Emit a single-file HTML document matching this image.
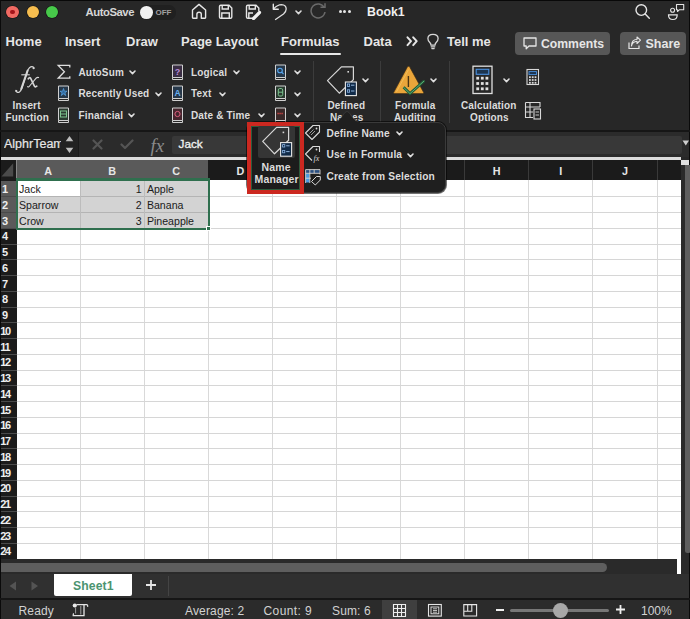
<!DOCTYPE html><html><head><meta charset="utf-8"><style>
*{box-sizing:border-box;margin:0;padding:0}
html,body{width:690px;height:619px;overflow:hidden;background:#272727;font-family:"Liberation Sans",sans-serif;}
.a{position:absolute}
.t{position:absolute;white-space:nowrap;line-height:1}
.tab{position:absolute;top:35.3px;font-size:13px;font-weight:bold;color:#e6e6e6;white-space:nowrap;line-height:13px}
.rl{position:absolute;font-size:10px;font-weight:bold;color:#dcdcdc;white-space:nowrap;line-height:10px;letter-spacing:0.15px}
.chev{position:absolute;width:6px;height:6px}
.cell{position:absolute;font-size:10.6px;color:#1a1a1a;white-space:nowrap;line-height:11px}
.rh{position:absolute;left:2px;font-size:11px;font-weight:bold;color:#eee;line-height:11px;letter-spacing:-0.5px}
.rh2{left:0.3px;letter-spacing:-1.3px}
.ch{position:absolute;top:166.3px;font-size:10.8px;font-weight:bold;color:#e6e6e6;line-height:10px;text-align:center}
.st{position:absolute;top:605px;font-size:12px;color:#d2d2d2;white-space:nowrap;line-height:12px;letter-spacing:0.15px}
</style></head><body>
<div class="a" style="left:0;top:0;width:690px;height:1px;background:#080808"></div>
<div class="a" style="left:0;top:0;width:1px;height:619px;background:#0a0a0a"></div>
<div class="a" style="left:689px;top:0;width:1px;height:619px;background:#0a0a0a"></div>
<div class="a" style="left:6.3px;top:5.999999999999999px;width:12.4px;height:12.4px;border-radius:50%;background:#f06a63;box-shadow:0 0 0 0.6px rgba(0,0,0,.5)"></div>
<div class="a" style="left:10.3px;top:10.0px;width:4.4px;height:4.4px;border-radius:50%;background:#a5151b;filter:blur(0.6px)"></div>
<div class="a" style="left:26.500000000000004px;top:5.999999999999999px;width:12.4px;height:12.4px;border-radius:50%;background:#f6bd4f;box-shadow:0 0 0 0.6px rgba(0,0,0,.5)"></div>
<div class="a" style="left:45.599999999999994px;top:5.999999999999999px;width:12.4px;height:12.4px;border-radius:50%;background:#47c94a;box-shadow:0 0 0 0.6px rgba(0,0,0,.5)"></div>
<div class="t" style="left:85.5px;top:6.5px;font-size:11.3px;font-weight:bold;color:#d6d6d6;letter-spacing:-0.45px">AutoSave</div>
<div class="a" style="left:139.5px;top:5px;width:36.5px;height:14.5px;border-radius:7px;background:#202020"></div>
<div class="a" style="left:140.3px;top:5.8px;width:12.8px;height:12.8px;border-radius:50%;background:#f0f0f0"></div>
<div class="t" style="left:155.5px;top:8.6px;font-size:8px;font-weight:bold;color:#a0a0a0">OFF</div>
<svg class="a" style="left:188px;top:0px" width="24" height="24" viewBox="188 0 24 24"><path d="M192.5 10 L199 4.4 L205.6 10 V17.6 Q205.6 18.2 205 18.2 H201.3 V14.2 Q201.3 12.3 199.1 12.3 Q196.9 12.3 196.9 14.2 V18.2 H193.1 Q192.5 18.2 192.5 17.6 Z" fill="none" stroke="#e6e6e6" stroke-width="1.4" stroke-linejoin="round"/></svg>
<svg class="a" style="left:217px;top:3px" width="17" height="17" viewBox="0 0 17 17"><path d="M2.5 3.5 Q2.5 2.2 3.8 2.2 H12 L14.8 5 V14 Q14.8 15.3 13.5 15.3 H3.8 Q2.5 15.3 2.5 14 Z" fill="none" stroke="#e6e6e6" stroke-width="1.4"/><path d="M5.2 2.5 V6 H11.3 V2.5 M4.8 15 V10 H12.3 V15" fill="none" stroke="#e6e6e6" stroke-width="1.4"/></svg>
<svg class="a" style="left:244px;top:3px" width="18" height="17" viewBox="0 0 18 17"><path d="M8 15.3 H3.8 Q2.5 15.3 2.5 14 V3.5 Q2.5 2.2 3.8 2.2 H12 L14.8 5 V8" fill="none" stroke="#e6e6e6" stroke-width="1.4"/><path d="M5.2 2.5 V6 H11.3 V2.5 M4.8 15 V10 H9" fill="none" stroke="#e6e6e6" stroke-width="1.4"/><path d="M9.5 15.5 L15.5 9.5" stroke="#f0f0f0" stroke-width="3.2" stroke-linecap="round"/></svg>
<svg class="a" style="left:266px;top:0px" width="24" height="24" viewBox="0 0 24 24"><path d="M7.5 9 Q11.5 4.6 15.5 4.6 Q20.2 4.8 20.2 9 Q20.2 11.5 17.5 14 L9.5 19.5" fill="none" stroke="#e0e0e0" stroke-width="1.3" stroke-linecap="round" stroke-linejoin="round"/><path d="M7.3 4.3 V9.2 H12.3" fill="none" stroke="#e6e6e6" stroke-width="1.4" stroke-linecap="round" stroke-linejoin="round"/></svg>
<svg class="a" style="left:294.5px;top:10px" width="7" height="5" viewBox="0 0 7 5"><path d="M1 1 L3.5 3.6 L6 1" fill="none" stroke="#dcdcdc" stroke-width="1.6" stroke-linecap="round" stroke-linejoin="round"/></svg>
<svg class="a" style="left:309px;top:3px" width="19" height="17" viewBox="0 0 19 17"><path d="M15.2 4.5 A7 7 0 1 0 16 9" fill="none" stroke="#6a6a6a" stroke-width="1.5"/><path d="M11.5 4.2 H16 V0.2" fill="none" stroke="#6a6a6a" stroke-width="1.5"/></svg>
<div class="a" style="left:338.5px;top:10.2px;width:3px;height:3px;border-radius:50%;background:#e6e6e6"></div>
<div class="a" style="left:343.3px;top:10.2px;width:3px;height:3px;border-radius:50%;background:#e6e6e6"></div>
<div class="a" style="left:348.2px;top:10.2px;width:3px;height:3px;border-radius:50%;background:#e6e6e6"></div>
<div class="t" style="left:367px;top:6px;font-size:12.3px;font-weight:bold;color:#f0f0f0">Book1</div>
<svg class="a" style="left:633px;top:2px" width="19" height="19" viewBox="0 0 19 19"><circle cx="8.3" cy="8.1" r="5.3" fill="none" stroke="#e6e6e6" stroke-width="1.4"/><path d="M12.2 12 L16.3 16.3" stroke="#e6e6e6" stroke-width="1.4" stroke-linecap="round"/></svg>
<svg class="a" style="left:666px;top:2px" width="21" height="20" viewBox="0 0 21 20"><circle cx="6.6" cy="8.2" r="2" fill="none" stroke="#e6e6e6" stroke-width="1.1"/><path d="M2.5 12.8 H11.2 Q11.3 17.5 6.9 17.5 Q2.4 17.5 2.5 12.8 Z" fill="none" stroke="#e6e6e6" stroke-width="1.2"/><path d="M10.5 2.5 H17.7 V7.7 H13.5 L11.5 9.5 V7.7 H10.5 Z" fill="none" stroke="#e6e6e6" stroke-width="1.1" stroke-linejoin="round"/></svg>
<div class="tab" style="left:5.5px">Home</div>
<div class="tab" style="left:65px">Insert</div>
<div class="tab" style="left:126px">Draw</div>
<div class="tab" style="left:181px">Page Layout</div>
<div class="tab" style="left:281px">Formulas</div>
<div class="tab" style="left:363.5px">Data</div>
<div class="a" style="left:280px;top:53px;width:61px;height:2px;background:#e8e8e8;border-radius:1px"></div>
<svg class="a" style="left:400px;top:30px" width="24" height="24" viewBox="400 30 24 24"><path d="M407.5 37.3 L411 41.2 L407.5 45.1 M413.2 37.3 L416.7 41.2 L413.2 45.1" fill="none" stroke="#e6e6e6" stroke-width="2" stroke-linecap="round" stroke-linejoin="round"/></svg>
<svg class="a" style="left:420px;top:30px" width="24" height="24" viewBox="420 30 24 24"><path d="M431 45.2 Q431 43.5 429.6 42.2 Q427.9 40.6 427.9 38.6 Q427.9 34.4 433 34.4 Q438.1 34.4 438.1 38.6 Q438.1 40.6 436.4 42.2 Q435 43.5 435 45.2 Z" fill="none" stroke="#d8d8d8" stroke-width="1.3" stroke-linejoin="round"/><path d="M431.2 46.8 H434.8 M431.8 48.6 H434.2" stroke="#d8d8d8" stroke-width="1.2" stroke-linecap="round"/></svg>
<div class="tab" style="left:447px">Tell me</div>
<div class="a" style="left:515px;top:31.5px;width:95px;height:23px;border-radius:4px;background:#575757"></div>
<svg class="a" style="left:522px;top:36px" width="16" height="15" viewBox="0 0 16 15"><path d="M2 2 H14 V10 H7 L4.2 12.8 V10 H2 Z" fill="none" stroke="#e6e6e6" stroke-width="1.3" stroke-linejoin="round"/></svg>
<div class="tab" style="left:541px;top:37.8px;font-size:12.2px">Comments</div>
<div class="a" style="left:620px;top:31.5px;width:66px;height:23px;border-radius:4px;background:#575757"></div>
<svg class="a" style="left:627px;top:36px" width="15" height="15" viewBox="0 0 15 15"><path d="M2 6.5 V12.5 H12 V9.5" fill="none" stroke="#e6e6e6" stroke-width="1.2"/><path d="M4.5 10 Q5.5 5.5 10 5.2 V7.5 L13.5 4.2 L10 1 V3.3 Q4.5 3.8 4.5 10 Z" fill="none" stroke="#e6e6e6" stroke-width="1.1" stroke-linejoin="round"/></svg>
<div class="tab" style="left:645.5px;top:37.5px;font-size:12.5px">Share</div>
<svg class="a" style="left:0;top:58px" width="56" height="40" viewBox="0 58 56 40"><path d="M16 90.3 Q16.6 93.2 19.2 92.2 Q20.9 91.2 22.2 87.5 L27.5 71 Q29.3 66.5 32 66.6 Q33.6 66.8 33.8 68" fill="none" stroke="#d6d6d6" stroke-width="1.2" stroke-linecap="round"/><path d="M21.2 89 L27.6 70.6" stroke="#d6d6d6" stroke-width="2" stroke-linecap="round"/><circle cx="33.6" cy="68.2" r="1.1" fill="#d6d6d6"/><circle cx="16.3" cy="91" r="1.1" fill="#d6d6d6"/><path d="M21.3 74.8 H29.8" stroke="#d6d6d6" stroke-width="1.1"/><path d="M28.3 78.8 Q29.5 77 30.6 78.2 L34.3 85.8 Q35.2 87.6 36.8 86.2" fill="none" stroke="#d6d6d6" stroke-width="1.7" stroke-linecap="round"/><path d="M38.6 77.6 Q37.5 77 36.3 78 L29.6 86 Q28.5 87.5 27.6 86.6" fill="none" stroke="#d6d6d6" stroke-width="1.1" stroke-linecap="round"/></svg>
<div class="rl" style="left:12.5px;top:101px">Insert</div>
<div class="rl" style="left:5.5px;top:112.8px">Function</div>
<svg class="a" style="left:52px;top:60px" width="24" height="24" viewBox="52 60 24 24"><path d="M69.8 67.6 V65.4 H58.2 L64.4 71.8 L58.2 78.2 H69.8 V76.2" fill="none" stroke="#dedede" stroke-width="1.3" stroke-linejoin="miter"/></svg>
<svg class="a" style="left:57px;top:85px" width="13" height="17" viewBox="0 0 13 17"><path d="M1.5 1 H11.5 V13.5 H1.5 Z" fill="#26384a" stroke="#d0d0d0" stroke-width="1"/><path d="M1.5 13.5 V15.5 H11.5 V13.5" fill="none" stroke="#d0d0d0" stroke-width="1"/><path d="M6.5 3.5 L7.4 6.2 H10 L7.9 7.8 L8.7 10.5 L6.5 8.9 L4.3 10.5 L5.1 7.8 L3 6.2 H5.6 Z" fill="#2f6aa0" stroke="#5aa6e8" stroke-width="0.7"/></svg>
<svg class="a" style="left:57px;top:107px" width="13" height="17" viewBox="0 0 13 17"><path d="M1.5 1 H11.5 V13.5 H1.5 Z" fill="#2a3a30" stroke="#d0d0d0" stroke-width="1"/><path d="M1.5 13.5 V15.5 H11.5 V13.5" fill="none" stroke="#d0d0d0" stroke-width="1"/><rect x="3.5" y="4" width="6" height="6" fill="none" stroke="#7cc38e" stroke-width="1"/><path d="M3.5 7 H9.5" stroke="#7cc38e" stroke-width="1"/></svg>
<div class="rl" style="left:78.5px;top:67.5px">AutoSum</div>
<svg class="a" style="left:128.5px;top:70px" width="7" height="5" viewBox="0 0 7 5"><path d="M1 1 L3.5 3.6 L6 1" fill="none" stroke="#e0e0e0" stroke-width="1.6" stroke-linecap="round" stroke-linejoin="round"/></svg>
<div class="rl" style="left:78.5px;top:89px">Recently Used</div>
<svg class="a" style="left:155px;top:91.5px" width="7" height="5" viewBox="0 0 7 5"><path d="M1 1 L3.5 3.6 L6 1" fill="none" stroke="#e0e0e0" stroke-width="1.6" stroke-linecap="round" stroke-linejoin="round"/></svg>
<div class="rl" style="left:78.5px;top:110.5px">Financial</div>
<svg class="a" style="left:127.5px;top:113px" width="7" height="5" viewBox="0 0 7 5"><path d="M1 1 L3.5 3.6 L6 1" fill="none" stroke="#e0e0e0" stroke-width="1.6" stroke-linecap="round" stroke-linejoin="round"/></svg>
<svg class="a" style="left:171px;top:64px" width="13" height="17" viewBox="0 0 13 17"><path d="M1.5 1 H11.5 V13.5 H1.5 Z" fill="#3a2e44" stroke="#d0d0d0" stroke-width="1"/><path d="M1.5 13.5 V15.5 H11.5 V13.5" fill="none" stroke="#d0d0d0" stroke-width="1"/><text x="6.5" y="11" font-size="9" font-weight="bold" text-anchor="middle" fill="#b88ad8" font-family="Liberation Sans">?</text></svg>
<svg class="a" style="left:171px;top:85px" width="13" height="17" viewBox="0 0 13 17"><path d="M1.5 1 H11.5 V13.5 H1.5 Z" fill="#26384a" stroke="#d0d0d0" stroke-width="1"/><path d="M1.5 13.5 V15.5 H11.5 V13.5" fill="none" stroke="#d0d0d0" stroke-width="1"/><text x="6.5" y="11" font-size="8.5" font-weight="bold" text-anchor="middle" fill="#6ab0f0" font-family="Liberation Sans">A</text></svg>
<svg class="a" style="left:171px;top:107px" width="13" height="17" viewBox="0 0 13 17"><path d="M1.5 1 H11.5 V13.5 H1.5 Z" fill="#46262e" stroke="#d0d0d0" stroke-width="1"/><path d="M1.5 13.5 V15.5 H11.5 V13.5" fill="none" stroke="#d0d0d0" stroke-width="1"/><circle cx="6.5" cy="7" r="2.6" fill="none" stroke="#e06080" stroke-width="1"/></svg>
<div class="rl" style="left:191px;top:67.5px">Logical</div>
<svg class="a" style="left:232.5px;top:70px" width="7" height="5" viewBox="0 0 7 5"><path d="M1 1 L3.5 3.6 L6 1" fill="none" stroke="#e0e0e0" stroke-width="1.6" stroke-linecap="round" stroke-linejoin="round"/></svg>
<div class="rl" style="left:191px;top:89px">Text</div>
<svg class="a" style="left:218.5px;top:91.5px" width="7" height="5" viewBox="0 0 7 5"><path d="M1 1 L3.5 3.6 L6 1" fill="none" stroke="#e0e0e0" stroke-width="1.6" stroke-linecap="round" stroke-linejoin="round"/></svg>
<div class="rl" style="left:191px;top:110.5px">Date &amp; Time</div>
<svg class="a" style="left:258px;top:113px" width="7" height="5" viewBox="0 0 7 5"><path d="M1 1 L3.5 3.6 L6 1" fill="none" stroke="#e0e0e0" stroke-width="1.6" stroke-linecap="round" stroke-linejoin="round"/></svg>
<svg class="a" style="left:274px;top:64px" width="13" height="17" viewBox="0 0 13 17"><path d="M1.5 1 H11.5 V13.5 H1.5 Z" fill="#26384a" stroke="#d0d0d0" stroke-width="1"/><path d="M1.5 13.5 V15.5 H11.5 V13.5" fill="none" stroke="#d0d0d0" stroke-width="1"/><circle cx="6" cy="6.5" r="2.3" fill="none" stroke="#5aa8f0" stroke-width="1.1"/><path d="M7.7 8.2 L9.5 10" stroke="#5aa8f0" stroke-width="1.1"/></svg>
<svg class="a" style="left:274px;top:85px" width="13" height="17" viewBox="0 0 13 17"><path d="M1.5 1 H11.5 V13.5 H1.5 Z" fill="#2a3a30" stroke="#d0d0d0" stroke-width="1"/><path d="M1.5 13.5 V15.5 H11.5 V13.5" fill="none" stroke="#d0d0d0" stroke-width="1"/><rect x="4.3" y="3.5" width="4.4" height="7.5" rx="1.5" fill="none" stroke="#7cc38e" stroke-width="1"/><path d="M4.3 7.2 H8.7" stroke="#7cc38e" stroke-width="1"/></svg>
<svg class="a" style="left:274px;top:107px" width="13" height="17" viewBox="0 0 13 17"><path d="M1.5 1 H11.5 V13.5 H1.5 Z" fill="#3a2a2a" stroke="#d0d0d0" stroke-width="1"/><path d="M1.5 13.5 V15.5 H11.5 V13.5" fill="none" stroke="#d0d0d0" stroke-width="1"/><path d="M3.5 6.5 H9.5" stroke="#e04848" stroke-width="1.4" stroke-dasharray="1.2 0.8"/></svg>
<svg class="a" style="left:293.5px;top:70px" width="7" height="5" viewBox="0 0 7 5"><path d="M1 1 L3.5 3.6 L6 1" fill="none" stroke="#e0e0e0" stroke-width="1.6" stroke-linecap="round" stroke-linejoin="round"/></svg>
<svg class="a" style="left:293.5px;top:91.5px" width="7" height="5" viewBox="0 0 7 5"><path d="M1 1 L3.5 3.6 L6 1" fill="none" stroke="#e0e0e0" stroke-width="1.6" stroke-linecap="round" stroke-linejoin="round"/></svg>
<svg class="a" style="left:293.5px;top:113px" width="7" height="5" viewBox="0 0 7 5"><path d="M1 1 L3.5 3.6 L6 1" fill="none" stroke="#e0e0e0" stroke-width="1.6" stroke-linecap="round" stroke-linejoin="round"/></svg>
<div class="a" style="left:313px;top:61px;width:1px;height:62px;background:#3c3c3c"></div>
<div class="a" style="left:379.5px;top:61px;width:1px;height:62px;background:#3c3c3c"></div>
<div class="a" style="left:449px;top:61px;width:1px;height:62px;background:#3c3c3c"></div>
<svg class="a" style="left:0;top:0" width="690" height="200" viewBox="0 0 690 200"><path d="M327.50 80.70 L341.40 66.80 L353.40 66.80 L353.40 79.60 L339.30 93.20 Z" fill="none" stroke="#d8d8d8" stroke-width="1.2" stroke-linejoin="round"/><rect x="347.40" y="71.00" width="1.6" height="1.6" fill="#d8d8d8"/><rect x="345.40" y="82.00" width="11" height="13.6" fill="#102a48" stroke="#e6e6e6" stroke-width="1.1"/><rect x="347.40" y="84.00" width="2.2" height="2.4" fill="none" stroke="#8fb8e8" stroke-width="0.8"/><rect x="347.40" y="89.80" width="2.2" height="2.4" fill="none" stroke="#8fb8e8" stroke-width="0.8"/><path d="M351.00 85.20 L354.40 85.20 M351.00 91.00 L354.40 91.00" stroke="#9fc4ee" stroke-width="0.9"/></svg>
<svg class="a" style="left:361.5px;top:77.5px" width="7" height="5" viewBox="0 0 7 5"><path d="M1 1 L3.5 3.6 L6 1" fill="none" stroke="#e0e0e0" stroke-width="1.6" stroke-linecap="round" stroke-linejoin="round"/></svg>
<div class="rl" style="left:327.5px;top:101px">Defined</div>
<div class="rl" style="left:330px;top:112.5px">Names</div>
<svg class="a" style="left:385px;top:60px" width="50" height="40" viewBox="385 60 50 40"><path d="M408.5 66.3 Q409.3 66.3 409.8 67.2 L423.5 92.3 Q424 93.6 422.6 93.6 H394.6 Q393.2 93.6 393.8 92.3 L407.3 67.2 Q407.8 66.3 408.5 66.3 Z" fill="#eaa53a" stroke="#3a2a12" stroke-width="0.6"/><path d="M408.5 69.5 L396.5 91.8" stroke="#f6cf70" stroke-width="0.8" opacity="0.7"/><path d="M408.4 76 V87" stroke="#4a3312" stroke-width="1.4"/><path d="M403.6 87.3 L410 93.6 L424.3 80.8" fill="none" stroke="#1f5a38" stroke-width="2.8" stroke-linejoin="miter"/><path d="M403.6 87.3 L410 93.6 L424.3 80.8" fill="none" stroke="#5fae74" stroke-width="1"/></svg>
<svg class="a" style="left:430px;top:77.5px" width="7" height="5" viewBox="0 0 7 5"><path d="M1 1 L3.5 3.6 L6 1" fill="none" stroke="#e0e0e0" stroke-width="1.6" stroke-linecap="round" stroke-linejoin="round"/></svg>
<div class="rl" style="left:395px;top:101.3px">Formula</div>
<div class="rl" style="left:394px;top:113.3px">Auditing</div>
<svg class="a" style="left:471px;top:65px" width="24" height="30" viewBox="0 0 24 30"><rect x="2" y="1.2" width="19" height="27.3" fill="none" stroke="#e0e0e0" stroke-width="1.3"/><rect x="5.2" y="4.3" width="12.6" height="5" fill="#1d3550" stroke="#4a90e0" stroke-width="1.1"/><rect x="5.3" y="11.8" width="2.8" height="2.8" fill="#e0e0e0"/><rect x="9.899999999999999" y="11.8" width="2.8" height="2.8" fill="#e0e0e0"/><rect x="14.5" y="11.8" width="2.8" height="2.8" fill="#e0e0e0"/><rect x="5.3" y="17.1" width="2.8" height="2.8" fill="#e0e0e0"/><rect x="9.899999999999999" y="17.1" width="2.8" height="2.8" fill="#e0e0e0"/><rect x="14.5" y="17.1" width="2.8" height="2.8" fill="#e0e0e0"/><rect x="5.3" y="22.4" width="2.8" height="2.8" fill="#e0e0e0"/><rect x="9.899999999999999" y="22.4" width="2.8" height="2.8" fill="#e0e0e0"/><rect x="14.5" y="22.4" width="2.8" height="2.8" fill="#e0e0e0"/></svg>
<svg class="a" style="left:503px;top:77.5px" width="7" height="5" viewBox="0 0 7 5"><path d="M1 1 L3.5 3.6 L6 1" fill="none" stroke="#e0e0e0" stroke-width="1.6" stroke-linecap="round" stroke-linejoin="round"/></svg>
<div class="rl" style="left:461px;top:101px">Calculation</div>
<div class="rl" style="left:470px;top:112.5px">Options</div>
<svg class="a" style="left:525px;top:68px" width="16" height="18" viewBox="0 0 16 18"><rect x="2" y="1.5" width="11.5" height="15" fill="none" stroke="#d8d8d8" stroke-width="1.1"/><rect x="4" y="3.6" width="7.5" height="3" fill="#1d3550" stroke="#4a90e0" stroke-width="0.9"/><rect x="4.0" y="8.3" width="1.8" height="1.8" fill="#d8d8d8"/><rect x="6.8" y="8.3" width="1.8" height="1.8" fill="#d8d8d8"/><rect x="9.6" y="8.3" width="1.8" height="1.8" fill="#d8d8d8"/><rect x="4.0" y="11.100000000000001" width="1.8" height="1.8" fill="#d8d8d8"/><rect x="6.8" y="11.100000000000001" width="1.8" height="1.8" fill="#d8d8d8"/><rect x="9.6" y="11.100000000000001" width="1.8" height="1.8" fill="#d8d8d8"/><rect x="4.0" y="13.9" width="1.8" height="1.8" fill="#d8d8d8"/><rect x="6.8" y="13.9" width="1.8" height="1.8" fill="#d8d8d8"/><rect x="9.6" y="13.9" width="1.8" height="1.8" fill="#d8d8d8"/></svg>
<svg class="a" style="left:524px;top:101px" width="19" height="20" viewBox="0 0 19 20"><path d="M1.5 1.5 H16 V6 M1.5 1.5 V16.5 H9 M1.5 6 H16 M1.5 11 H9 M6 1.5 V16.5" fill="none" stroke="#d8d8d8" stroke-width="1.1"/><rect x="10" y="8" width="6.5" height="10" fill="none" stroke="#d8d8d8" stroke-width="1.1"/><path d="M11.5 11 H15 M11.5 14 H15" stroke="#d8d8d8" stroke-width="0.9"/></svg>
<div class="a" style="left:0;top:129.5px;width:690px;height:2px;background:#161616"></div>
<div class="a" style="left:1px;top:131.5px;width:688px;height:25.5px;background:#2b2b2b"></div>
<div class="a" style="left:1px;top:131.5px;width:77px;height:25.5px;background:#222"></div>
<div class="a" style="left:77.5px;top:131.5px;width:1px;height:25.5px;background:#1a1a1a"></div>
<div class="t" style="left:4px;top:137.5px;font-size:12.5px;color:#e6e6e6;width:57px;overflow:hidden;-webkit-text-stroke:0.2px #e6e6e6">AlphrTeam</div>
<svg class="a" style="left:65px;top:135px" width="9" height="19" viewBox="0 0 9 19"><path d="M4.5 1 L8.3 6.3 H0.7 Z M4.5 18 L8.3 12.7 H0.7 Z" fill="#bdbdbd"/></svg>
<svg class="a" style="left:92px;top:139px" width="11" height="11" viewBox="0 0 11 11"><path d="M1.5 1.5 L9.5 9.5 M9.5 1.5 L1.5 9.5" stroke="#555" stroke-width="2.2" stroke-linecap="round"/></svg>
<svg class="a" style="left:120px;top:139px" width="14" height="11" viewBox="0 0 14 11"><path d="M1.5 5.5 L5 9 L12.5 1.5" fill="none" stroke="#555" stroke-width="2.2" stroke-linecap="round" stroke-linejoin="round"/></svg>
<div class="t" style="left:150.5px;top:135.5px;font-size:19px;font-style:italic;font-family:'Liberation Serif',serif;color:#8a8a8a">fx</div>
<div class="a" style="left:171.5px;top:135.5px;width:510px;height:18.5px;background:#383838;border-radius:2px"></div>
<div class="t" style="left:178.5px;top:138.5px;font-size:11.8px;color:#f2f2f2;-webkit-text-stroke:0.3px #f2f2f2">Jack</div>
<svg class="a" style="left:682px;top:139px" width="8" height="8" viewBox="0 0 8 8"><path d="M0.5 1.5 H7 L3.8 6.5 Z" fill="#cfcfcf"/></svg>
<div class="a" style="left:1px;top:157px;width:680px;height:2.5px;background:#dcdcdc"></div>
<div class="a" style="left:1px;top:159.5px;width:680px;height:20.5px;background:#1b1b1b"></div>
<div class="a" style="left:1px;top:180px;width:15.5px;height:379px;background:#1b1b1b"></div>
<div class="a" style="left:16.5px;top:159.5px;width:191.8px;height:20.5px;background:#5a5a5a"></div>
<div class="a" style="left:1px;top:181px;width:15.5px;height:47.25px;background:#5a5a5a"></div>
<svg class="a" style="left:0;top:155px" width="20" height="28" viewBox="0 155 20 28"><path d="M13.2 163.2 V176.6 H1.5 Z" fill="#4a4a4a"/></svg>
<div class="a" style="left:16px;top:159.5px;width:1px;height:18.80000000000001px;background:#8a8a8a"></div>
<div class="a" style="left:16.5px;top:180px;width:664.5px;height:379px;background:#ffffff"></div>
<div class="a" style="left:80.1px;top:181px;width:128.2px;height:47.25px;background:#d3d3d3"></div>
<div class="a" style="left:16.5px;top:196.75px;width:63.599999999999994px;height:31.5px;background:#d3d3d3"></div>
<div class="a" style="left:79.6px;top:180px;width:1px;height:379px;background:#d9d9d9"></div>
<div class="a" style="left:143.7px;top:180px;width:1px;height:379px;background:#d9d9d9"></div>
<div class="a" style="left:207.8px;top:180px;width:1px;height:379px;background:#d9d9d9"></div>
<div class="a" style="left:271.9px;top:180px;width:1px;height:379px;background:#d9d9d9"></div>
<div class="a" style="left:271.9px;top:159.5px;width:1px;height:20.5px;background:#3a3a3a"></div>
<div class="a" style="left:336.0px;top:180px;width:1px;height:379px;background:#d9d9d9"></div>
<div class="a" style="left:336.0px;top:159.5px;width:1px;height:20.5px;background:#3a3a3a"></div>
<div class="a" style="left:400.1px;top:180px;width:1px;height:379px;background:#d9d9d9"></div>
<div class="a" style="left:400.1px;top:159.5px;width:1px;height:20.5px;background:#3a3a3a"></div>
<div class="a" style="left:464.2px;top:180px;width:1px;height:379px;background:#d9d9d9"></div>
<div class="a" style="left:464.2px;top:159.5px;width:1px;height:20.5px;background:#3a3a3a"></div>
<div class="a" style="left:528.3px;top:180px;width:1px;height:379px;background:#d9d9d9"></div>
<div class="a" style="left:528.3px;top:159.5px;width:1px;height:20.5px;background:#3a3a3a"></div>
<div class="a" style="left:592.4px;top:180px;width:1px;height:379px;background:#d9d9d9"></div>
<div class="a" style="left:592.4px;top:159.5px;width:1px;height:20.5px;background:#3a3a3a"></div>
<div class="a" style="left:656.5px;top:180px;width:1px;height:379px;background:#d9d9d9"></div>
<div class="a" style="left:656.5px;top:159.5px;width:1px;height:20.5px;background:#3a3a3a"></div>
<div class="a" style="left:16.5px;top:196.25px;width:664.5px;height:1px;background:#d6d6d6"></div>
<div class="a" style="left:1px;top:196.25px;width:15.5px;height:1px;background:#4a4a4a"></div>
<div class="a" style="left:16.5px;top:212.0px;width:664.5px;height:1px;background:#d6d6d6"></div>
<div class="a" style="left:1px;top:212.0px;width:15.5px;height:1px;background:#4a4a4a"></div>
<div class="a" style="left:16.5px;top:227.75px;width:664.5px;height:1px;background:#d6d6d6"></div>
<div class="a" style="left:1px;top:227.75px;width:15.5px;height:1px;background:#4a4a4a"></div>
<div class="a" style="left:16.5px;top:243.5px;width:664.5px;height:1px;background:#d6d6d6"></div>
<div class="a" style="left:1px;top:243.5px;width:15.5px;height:1px;background:#4a4a4a"></div>
<div class="a" style="left:16.5px;top:259.25px;width:664.5px;height:1px;background:#d6d6d6"></div>
<div class="a" style="left:1px;top:259.25px;width:15.5px;height:1px;background:#4a4a4a"></div>
<div class="a" style="left:16.5px;top:275.0px;width:664.5px;height:1px;background:#d6d6d6"></div>
<div class="a" style="left:1px;top:275.0px;width:15.5px;height:1px;background:#4a4a4a"></div>
<div class="a" style="left:16.5px;top:290.75px;width:664.5px;height:1px;background:#d6d6d6"></div>
<div class="a" style="left:1px;top:290.75px;width:15.5px;height:1px;background:#4a4a4a"></div>
<div class="a" style="left:16.5px;top:306.5px;width:664.5px;height:1px;background:#d6d6d6"></div>
<div class="a" style="left:1px;top:306.5px;width:15.5px;height:1px;background:#4a4a4a"></div>
<div class="a" style="left:16.5px;top:322.25px;width:664.5px;height:1px;background:#d6d6d6"></div>
<div class="a" style="left:1px;top:322.25px;width:15.5px;height:1px;background:#4a4a4a"></div>
<div class="a" style="left:16.5px;top:338.0px;width:664.5px;height:1px;background:#d6d6d6"></div>
<div class="a" style="left:1px;top:338.0px;width:15.5px;height:1px;background:#4a4a4a"></div>
<div class="a" style="left:16.5px;top:353.75px;width:664.5px;height:1px;background:#d6d6d6"></div>
<div class="a" style="left:1px;top:353.75px;width:15.5px;height:1px;background:#4a4a4a"></div>
<div class="a" style="left:16.5px;top:369.5px;width:664.5px;height:1px;background:#d6d6d6"></div>
<div class="a" style="left:1px;top:369.5px;width:15.5px;height:1px;background:#4a4a4a"></div>
<div class="a" style="left:16.5px;top:385.25px;width:664.5px;height:1px;background:#d6d6d6"></div>
<div class="a" style="left:1px;top:385.25px;width:15.5px;height:1px;background:#4a4a4a"></div>
<div class="a" style="left:16.5px;top:401.0px;width:664.5px;height:1px;background:#d6d6d6"></div>
<div class="a" style="left:1px;top:401.0px;width:15.5px;height:1px;background:#4a4a4a"></div>
<div class="a" style="left:16.5px;top:416.75px;width:664.5px;height:1px;background:#d6d6d6"></div>
<div class="a" style="left:1px;top:416.75px;width:15.5px;height:1px;background:#4a4a4a"></div>
<div class="a" style="left:16.5px;top:432.5px;width:664.5px;height:1px;background:#d6d6d6"></div>
<div class="a" style="left:1px;top:432.5px;width:15.5px;height:1px;background:#4a4a4a"></div>
<div class="a" style="left:16.5px;top:448.25px;width:664.5px;height:1px;background:#d6d6d6"></div>
<div class="a" style="left:1px;top:448.25px;width:15.5px;height:1px;background:#4a4a4a"></div>
<div class="a" style="left:16.5px;top:464.0px;width:664.5px;height:1px;background:#d6d6d6"></div>
<div class="a" style="left:1px;top:464.0px;width:15.5px;height:1px;background:#4a4a4a"></div>
<div class="a" style="left:16.5px;top:479.75px;width:664.5px;height:1px;background:#d6d6d6"></div>
<div class="a" style="left:1px;top:479.75px;width:15.5px;height:1px;background:#4a4a4a"></div>
<div class="a" style="left:16.5px;top:495.5px;width:664.5px;height:1px;background:#d6d6d6"></div>
<div class="a" style="left:1px;top:495.5px;width:15.5px;height:1px;background:#4a4a4a"></div>
<div class="a" style="left:16.5px;top:511.25px;width:664.5px;height:1px;background:#d6d6d6"></div>
<div class="a" style="left:1px;top:511.25px;width:15.5px;height:1px;background:#4a4a4a"></div>
<div class="a" style="left:16.5px;top:527.0px;width:664.5px;height:1px;background:#d6d6d6"></div>
<div class="a" style="left:1px;top:527.0px;width:15.5px;height:1px;background:#4a4a4a"></div>
<div class="a" style="left:16.5px;top:542.75px;width:664.5px;height:1px;background:#d6d6d6"></div>
<div class="a" style="left:1px;top:542.75px;width:15.5px;height:1px;background:#4a4a4a"></div>
<div class="a" style="left:16.5px;top:196.25px;width:191.79999999999998px;height:1px;background:#b4b4b4"></div>
<div class="a" style="left:16.5px;top:212.0px;width:191.79999999999998px;height:1px;background:#b4b4b4"></div>
<div class="a" style="left:79.6px;top:181px;width:1px;height:47.25px;background:#bcbcbc"></div>
<div class="a" style="left:143.7px;top:181px;width:1px;height:47.25px;background:#bcbcbc"></div>
<div class="a" style="left:17px;top:181px;width:62.599999999999994px;height:15.25px;background:#fff"></div>
<div class="a" style="left:16px;top:178.3px;width:194.29999999999998px;height:2.7px;background:#2f6f4e"></div>
<div class="a" style="left:16px;top:179px;width:1.5px;height:50.25px;background:#2f6f4e"></div>
<div class="a" style="left:207.99999999999997px;top:181px;width:2px;height:48.25px;background:#2f6f4e"></div>
<div class="a" style="left:16px;top:227.75px;width:194.29999999999998px;height:2px;background:#2f6f4e"></div>
<div class="a" style="left:205.79999999999998px;top:226.25px;width:5px;height:5px;background:#2f6f4e;border:1px solid #fff"></div>
<div class="ch" style="left:38.05px;width:20px">A</div>
<div class="ch" style="left:102.15px;width:20px">B</div>
<div class="ch" style="left:166.25px;width:20px">C</div>
<div class="ch" style="left:230.35px;width:20px">D</div>
<div class="ch" style="left:294.45px;width:20px">E</div>
<div class="ch" style="left:358.55px;width:20px">F</div>
<div class="ch" style="left:422.65px;width:20px">G</div>
<div class="ch" style="left:486.75px;width:20px">H</div>
<div class="ch" style="left:550.85px;width:20px">I</div>
<div class="ch" style="left:614.95px;width:20px">J</div>
<div class="rh" style="top:184.0px">1</div>
<div class="rh" style="top:199.75px">2</div>
<div class="rh" style="top:215.5px">3</div>
<div class="rh" style="top:231.25px">4</div>
<div class="rh" style="top:247.0px">5</div>
<div class="rh" style="top:262.75px">6</div>
<div class="rh" style="top:278.5px">7</div>
<div class="rh" style="top:294.25px">8</div>
<div class="rh" style="top:310.0px">9</div>
<div class="rh rh2" style="top:325.75px">10</div>
<div class="rh rh2" style="top:341.5px">11</div>
<div class="rh rh2" style="top:357.25px">12</div>
<div class="rh rh2" style="top:373.0px">13</div>
<div class="rh rh2" style="top:388.75px">14</div>
<div class="rh rh2" style="top:404.5px">15</div>
<div class="rh rh2" style="top:420.25px">16</div>
<div class="rh rh2" style="top:436.0px">17</div>
<div class="rh rh2" style="top:451.75px">18</div>
<div class="rh rh2" style="top:467.5px">19</div>
<div class="rh rh2" style="top:483.25px">20</div>
<div class="rh rh2" style="top:499.0px">21</div>
<div class="rh rh2" style="top:514.75px">22</div>
<div class="rh rh2" style="top:530.5px">23</div>
<div class="rh rh2" style="top:546.25px">24</div>
<div class="cell" style="left:19px;top:184.0px">Jack</div>
<div class="cell" style="left:80.1px;width:61.6px;text-align:right;top:184.0px">1</div>
<div class="cell" style="left:146.9px;top:184.0px">Apple</div>
<div class="cell" style="left:19px;top:199.75px">Sparrow</div>
<div class="cell" style="left:80.1px;width:61.6px;text-align:right;top:199.75px">2</div>
<div class="cell" style="left:146.9px;top:199.75px">Banana</div>
<div class="cell" style="left:19px;top:215.5px">Crow</div>
<div class="cell" style="left:80.1px;width:61.6px;text-align:right;top:215.5px">3</div>
<div class="cell" style="left:146.9px;top:215.5px">Pineapple</div>
<div class="a" style="left:681px;top:159.5px;width:8px;height:414.5px;background:#2a2a2a"></div>
<div class="a" style="left:681px;top:159.5px;width:8px;height:5px;background:#e0e0e0"></div>
<div class="a" style="left:684.5px;top:165px;width:5px;height:388px;background:#5e5e5e;border-radius:0 0 1px 2.5px"></div>
<div class="a" style="left:1px;top:559px;width:676px;height:15px;background:#2a2a2a"></div>
<div class="a" style="left:1px;top:562.5px;width:606px;height:9px;background:#5e5e5e;border-radius:0 4.5px 4.5px 0"></div>
<div class="a" style="left:677px;top:559px;width:4px;height:15px;background:#fff"></div>
<div class="a" style="left:1px;top:574px;width:688px;height:24px;background:#303030"></div>
<svg class="a" style="left:7px;top:579px" width="35" height="14" viewBox="0 0 35 14"><path d="M9 2.5 L2.5 7 L9 11.5 Z M24.5 2.5 L31 7 L24.5 11.5 Z" fill="#545454"/></svg>
<div class="a" style="left:54px;top:574px;width:78px;height:21.5px;background:#fff;border-radius:0 0 2px 2px"></div>
<div class="t" style="left:73px;top:580px;font-size:12.2px;font-weight:bold;color:#4b9470;letter-spacing:0.1px">Sheet1</div>
<svg class="a" style="left:145px;top:579px" width="12" height="12" viewBox="0 0 12 12"><path d="M6 1 V11 M1 6 H11" stroke="#e6e6e6" stroke-width="1.8"/></svg>
<div class="a" style="left:168px;top:576px;width:1px;height:20px;background:#444"></div>
<div class="a" style="left:0;top:597.5px;width:690px;height:2.5px;background:#161616"></div>
<div class="a" style="left:1px;top:600px;width:688px;height:19px;background:#2b2b2b"></div>
<div class="st" style="left:18.5px">Ready</div>
<svg class="a" style="left:60px;top:598px" width="40" height="21" viewBox="60 598 40 21"><circle cx="74.8" cy="605.5" r="2.1" fill="#ececec"/><path d="M76.5 604.6 H86.5 Q88 604.8 87.6 606.8" fill="none" stroke="#e6e6e6" stroke-width="1.2"/><path d="M84 604.6 V615.6 H73.2 Q73 613.8 74 613.6" fill="none" stroke="#e6e6e6" stroke-width="1.3"/><path d="M75.6 607.5 V613.5 M80.8 606 V614.5" stroke="#bdbdbd" stroke-width="0.8"/></svg>
<div class="st" style="left:185px">Average: 2</div>
<div class="st" style="left:263.5px;letter-spacing:0.4px">Count: 9</div>
<div class="st" style="left:332px">Sum: 6</div>
<div class="a" style="left:382px;top:600px;width:35px;height:19px;background:#3f3f3f"></div>
<svg class="a" style="left:392px;top:603px" width="16" height="15" viewBox="0 0 16 15"><path d="M1.5 1.5 H13.5 V13.5 H1.5 Z M1.5 5.5 H13.5 M1.5 9.5 H13.5 M5.5 1.5 V13.5 M9.5 1.5 V13.5" fill="none" stroke="#eeeeee" stroke-width="1.1"/></svg>
<svg class="a" style="left:420px;top:600px" width="25" height="19" viewBox="420 600 25 19"><rect x="428.5" y="604.5" width="12.8" height="11.6" fill="none" stroke="#e6e6e6" stroke-width="1.1"/><rect x="431" y="607" width="7.8" height="6.8" fill="none" stroke="#e6e6e6" stroke-width="0.9"/><path d="M433 608.8 H437 M433 610.5 H437 M433 612.2 H437" stroke="#e6e6e6" stroke-width="0.8"/></svg>
<svg class="a" style="left:460px;top:600px" width="20" height="19" viewBox="460 600 20 19"><path d="M463.8 604.6 H476.6 V616 H463.8 Z M463.8 611.2 H471.8 V604.6 M467.7 604.6 V611.2" fill="none" stroke="#e6e6e6" stroke-width="1.1"/></svg>
<div class="a" style="left:496px;top:609px;width:8px;height:2px;background:#eee"></div>
<div class="a" style="left:510px;top:608.5px;width:99px;height:3px;background:#777;border-radius:1.5px"></div>
<div class="a" style="left:552.5px;top:602.5px;width:15px;height:15px;border-radius:50%;background:#a8a8a8"></div>
<svg class="a" style="left:615px;top:604px" width="11" height="11" viewBox="0 0 11 11"><path d="M5.5 1 V10 M1 5.5 H10" stroke="#eeeeee" stroke-width="1.8"/></svg>
<div class="st" style="left:641px;letter-spacing:0">100%</div>
<div class="a" style="left:246.5px;top:122px;width:199px;height:71.3px;background:#1f1f1f;border:1px solid #3a3a3a;border-radius:8px;box-shadow:0 0 0 1px rgba(0,0,0,0.55)"></div>
<svg class="a" style="left:330px;top:105px" width="36" height="20" viewBox="330 105 36 20"><path d="M334.5 122.6 Q338 122 341 118 L345 112.8 Q347 110.6 349 112.8 L353 118 Q356 122 359.5 122.6 Z" fill="#1f1f1f"/><path d="M334.5 122.3 Q338 121.7 341 117.7 L345 112.5 Q347 110.3 349 112.5 L353 117.7 Q356 121.7 359.5 122.3" fill="none" stroke="#3a3a3a" stroke-width="0.8"/></svg>
<div class="a" style="left:334px;top:122.3px;width:26px;height:2px;background:#1f1f1f"></div>
<div class="a" style="left:246.5px;top:121.5px;width:57.5px;height:72px;border:4px solid #cc2820;background:#1c1c1c"></div>
<div class="a" style="left:250.5px;top:125.5px;width:49.5px;height:64px;border:1px solid #2c5a3c"></div>
<div class="a" style="left:257.5px;top:126px;width:37px;height:32px;background:#353535;border-radius:2px"></div>
<svg class="a" style="left:0;top:0" width="690" height="200" viewBox="0 0 690 200"><path d="M262.70 141.30 L276.60 127.40 L288.60 127.40 L288.60 140.20 L274.50 153.80 Z" fill="none" stroke="#d8d8d8" stroke-width="1.2" stroke-linejoin="round"/><rect x="282.60" y="131.60" width="1.6" height="1.6" fill="#d8d8d8"/><rect x="280.60" y="142.60" width="11" height="13.6" fill="#102a48" stroke="#e6e6e6" stroke-width="1.1"/><rect x="282.60" y="144.60" width="2.2" height="2.4" fill="none" stroke="#8fb8e8" stroke-width="0.8"/><rect x="282.60" y="150.40" width="2.2" height="2.4" fill="none" stroke="#8fb8e8" stroke-width="0.8"/><path d="M286.20 145.80 L289.60 145.80 M286.20 151.60 L289.60 151.60" stroke="#9fc4ee" stroke-width="0.9"/></svg>
<div class="rl" style="left:261.5px;top:162.3px;font-size:10.5px">Name</div>
<div class="rl" style="left:254.5px;top:173.8px;font-size:10.5px">Manager</div>
<svg class="a" style="left:304px;top:124px" width="17" height="17" viewBox="0 0 17 17"><path d="M1.5 9 L9 1.5 H15.5 V8 L8 15.5 Z" fill="none" stroke="#d8d8d8" stroke-width="1.1" stroke-linejoin="round"/><circle cx="12.5" cy="4.5" r="0.9" fill="#d8d8d8"/><path d="M5.5 9.5 L9.5 5.5 M7 11 L11 7" stroke="#bdbdbd" stroke-width="0.8"/></svg>
<div class="rl" style="left:326.5px;top:129px;font-size:10.2px">Define Name</div>
<svg class="a" style="left:396px;top:131px" width="7" height="5" viewBox="0 0 7 5"><path d="M1 1 L3.5 3.6 L6 1" fill="none" stroke="#e0e0e0" stroke-width="1.6" stroke-linecap="round" stroke-linejoin="round"/></svg>
<svg class="a" style="left:304px;top:145px" width="17" height="18" viewBox="0 0 17 18"><path d="M8 15.5 L1.5 9 L9 1.5 H15.5 V7" fill="none" stroke="#d8d8d8" stroke-width="1.1" stroke-linejoin="round"/><circle cx="12.5" cy="4.5" r="0.9" fill="#d8d8d8"/><text x="12.5" y="16" font-size="8" font-style="italic" font-family="Liberation Serif" fill="#d8d8d8" text-anchor="middle">fx</text></svg>
<div class="rl" style="left:326.5px;top:150.4px;font-size:10.2px">Use in Formula</div>
<svg class="a" style="left:407px;top:152.5px" width="7" height="5" viewBox="0 0 7 5"><path d="M1 1 L3.5 3.6 L6 1" fill="none" stroke="#e0e0e0" stroke-width="1.6" stroke-linecap="round" stroke-linejoin="round"/></svg>
<svg class="a" style="left:300px;top:165px" width="25" height="22" viewBox="300 165 25 22"><rect x="306" y="170" width="3.5" height="3" fill="#2a4f80"/><rect x="310" y="170" width="4" height="3" fill="#2a4f80"/><rect x="314.5" y="170" width="5" height="3" fill="#2a4f80"/><rect x="306" y="173.5" width="3.5" height="9" fill="#4a9ae0"/><path d="M305.6 183 V169.6 H320 V174.5 M305.6 173.3 H320 M309.8 169.6 V183 M314.2 169.6 V173.3 M305.6 178.2 H311" fill="none" stroke="#d8d8d8" stroke-width="0.9"/><path d="M311.5 181.5 L316.5 176.5 H320.3 V180 L315.3 185 Z" fill="#1f1f1f" stroke="#d8d8d8" stroke-width="1"/></svg>
<div class="rl" style="left:326.5px;top:172.2px;font-size:10.2px">Create from Selection</div>
</body></html>
